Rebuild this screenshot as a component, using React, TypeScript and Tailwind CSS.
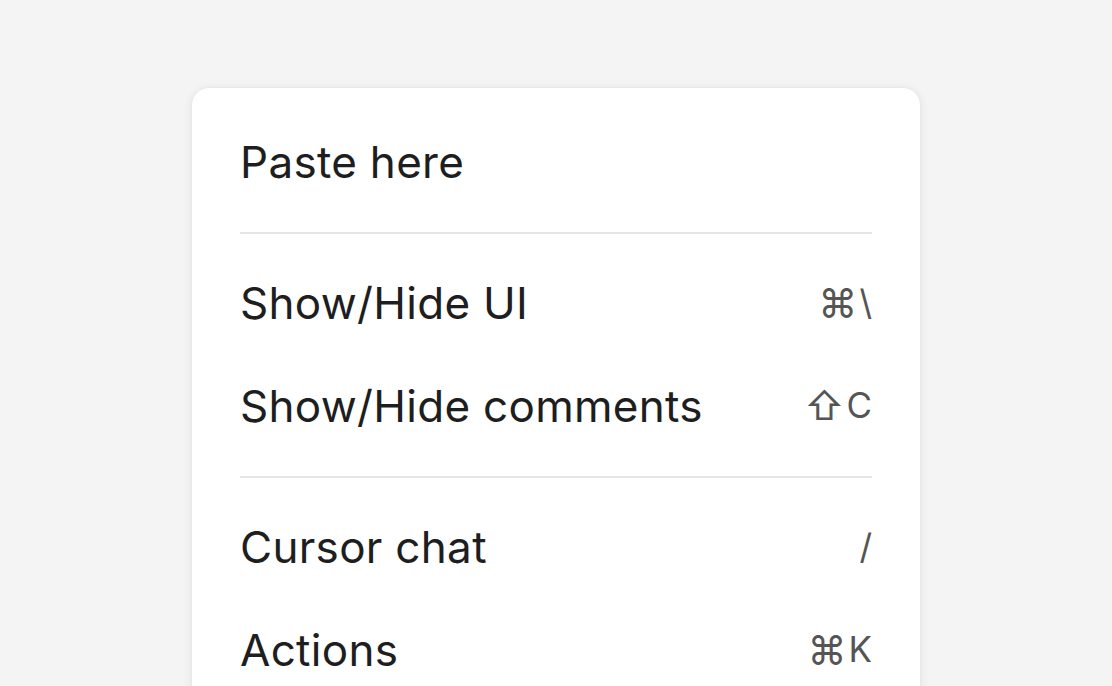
import React from "react";

type Item = { label: string; shortcut?: string[] };

const groups: Item[][] = [
  [{ label: "Paste here" }],
  [
    { label: "Show/Hide UI", shortcut: ["⌘", "\\"] },
    { label: "Show/Hide comments", shortcut: ["⇧", "C"] },
  ],
  [
    { label: "Cursor chat", shortcut: ["/"] },
    { label: "Actions", shortcut: ["⌘", "K"] },
  ],
];

const symbols = ["⌘", "⇧"];

function MenuRow({ item }: { item: Item }) {
  return (
    <div className="flex h-[103px] items-center justify-between">
      <span className="text-[44px] leading-none tracking-[0.3px] text-[#1e1e1e]">{item.label}</span>
      {item.shortcut && (
        <span className="flex items-center gap-[2px] text-[35px] leading-none text-[#555555]">
          {item.shortcut.map((k) => (
            <span key={k} className={symbols.includes(k) ? "text-[39px]" : ""}>
              {k}
            </span>
          ))}
        </span>
      )}
    </div>
  );
}

export default function App() {
  return (
    <div
      className="h-[686px] w-full overflow-hidden bg-[#f4f4f4] pt-[87px]"
      style={{ fontFamily: "Inter, 'Noto Sans', 'DejaVu Sans', sans-serif" }}
    >
      <div className="mx-auto w-[730px] rounded-[18px] border border-[#e9e9e9] bg-white px-[48px] pt-[22px] pb-6 shadow-[0_1px_8px_rgba(0,0,0,0.07)]">
        {groups.map((group, gi) => (
          <div key={gi}>
            {gi > 0 && <div className="mt-[19px] mb-[17px] h-[2px] bg-[#e6e6e6]" />}
            {group.map((item) => (
              <MenuRow key={item.label} item={item} />
            ))}
          </div>
        ))}
      </div>
    </div>
  );
}
